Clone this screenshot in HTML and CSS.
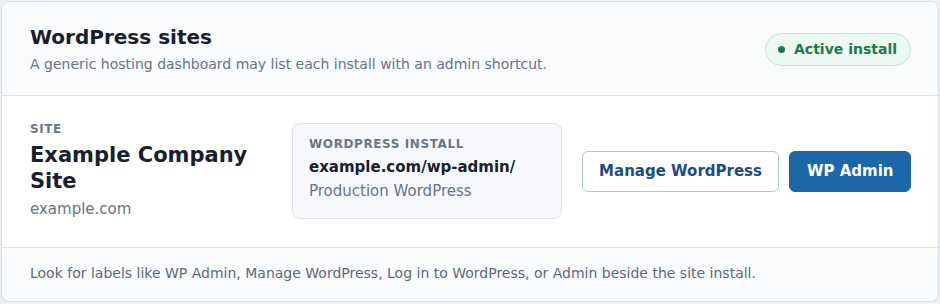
FILE: index.html
```html
<!DOCTYPE html>
<html>
<head>
    <title>WordPress sites</title>
    <link rel="stylesheet" href="styles.css">
</head>
<body>
    <div class="card">
        <div class="card-header">
            <div>
                <h1>WordPress sites</h1>
                <p class="subtitle">A generic hosting dashboard may list each install with an admin shortcut.</p>
            </div>
            <span class="badge"><span class="dot"></span>Active install</span>
        </div>
        <div class="card-body">
            <div class="site">
                <div class="label">Site</div>
                <div class="site-name">Example Company Site</div>
                <div class="site-domain">example.com</div>
            </div>
            <div class="install">
                <div class="label">WordPress install</div>
                <div class="install-path">example.com/wp-admin/</div>
                <div class="install-env">Production WordPress</div>
            </div>
            <div class="actions">
                <button class="btn btn-outline">Manage WordPress</button>
                <button class="btn btn-primary">WP Admin</button>
            </div>
        </div>
        <div class="card-footer">
            Look for labels like WP Admin, Manage WordPress, Log in to WordPress, or Admin beside the site install.
        </div>
    </div>
</body>
</html>
```

FILE: styles.css
```css
body {
    margin: 0;
    padding: 1px 1px 0 1px;
    font-family: "DejaVu Sans", sans-serif;
    background-color: #eef1f5;
}
.card {
    width: 936px;
    background: white;
    border: 1px solid #dbe0e8;
    border-radius: 9px;
    box-shadow: 0 1px 2px rgba(20, 30, 50, 0.08);
    overflow: hidden;
}
.card-header {
    display: flex;
    justify-content: space-between;
    align-items: center;
    padding: 22px 27px 21px 28px;
    background: #f9fbfd;
    border-bottom: 1px solid #dbe0e8;
}
h1 {
    margin: 0;
    font-size: 20px;
    line-height: 26px;
    color: #18202c;
}
.subtitle {
    margin: 4px 0 0;
    font-size: 14px;
    line-height: 20px;
    color: #687385;
}
.badge {
    display: flex;
    align-items: center;
    gap: 9px;
    padding: 6px 13px 6px 12px;
    border: 1px solid #bde6cf;
    border-radius: 17px;
    background: #edf8f2;
    color: #1b7a52;
    font-size: 14px;
    font-weight: bold;
    line-height: 19px;
}
.dot {
    width: 7px;
    height: 7px;
    border-radius: 50%;
    background: #1b7a52;
}
.card-body {
    display: flex;
    align-items: center;
    padding: 25px 27px 26px 28px;
}
.site {
    width: 240px;
    margin-right: 22px;
}
.label {
    font-size: 12px;
    line-height: 16px;
    font-weight: bold;
    letter-spacing: 0.6px;
    text-transform: uppercase;
    color: #6b7587;
}
.site-name {
    margin-top: 5px;
    font-size: 21px;
    line-height: 26px;
    font-weight: bold;
    color: #18202c;
}
.site-domain {
    margin-top: 3px;
    font-size: 15px;
    line-height: 24px;
    color: #687385;
}
.install {
    width: 236px;
    padding: 12px 16px 15px;
    background: #f6f8fb;
    border: 1px solid #dde2ea;
    border-radius: 8px;
}
.install .label {
    margin-bottom: 3px;
}
.install-path {
    font-size: 15px;
    line-height: 24px;
    font-weight: bold;
    color: #18202c;
}
.install-env {
    font-size: 15px;
    line-height: 24px;
    color: #687385;
}
.actions {
    display: flex;
    gap: 10px;
    margin-left: auto;
}
.btn {
    height: 41px;
    padding: 0 16.5px;
    border-radius: 6px;
    font-family: "DejaVu Sans", sans-serif;
    font-size: 15px;
    font-weight: bold;
    cursor: pointer;
}
.btn-outline {
    background: white;
    border: 1px solid #a9c9e6;
    color: #1b4d7e;
}
.btn-primary {
    background: #1b67a8;
    border: 1px solid #1b67a8;
    color: white;
}
.card-footer {
    padding: 15px 28px 18px;
    background: #f9fbfd;
    border-top: 1px solid #dbe0e8;
    font-size: 14px;
    line-height: 20px;
    color: #5f6878;
}
```
